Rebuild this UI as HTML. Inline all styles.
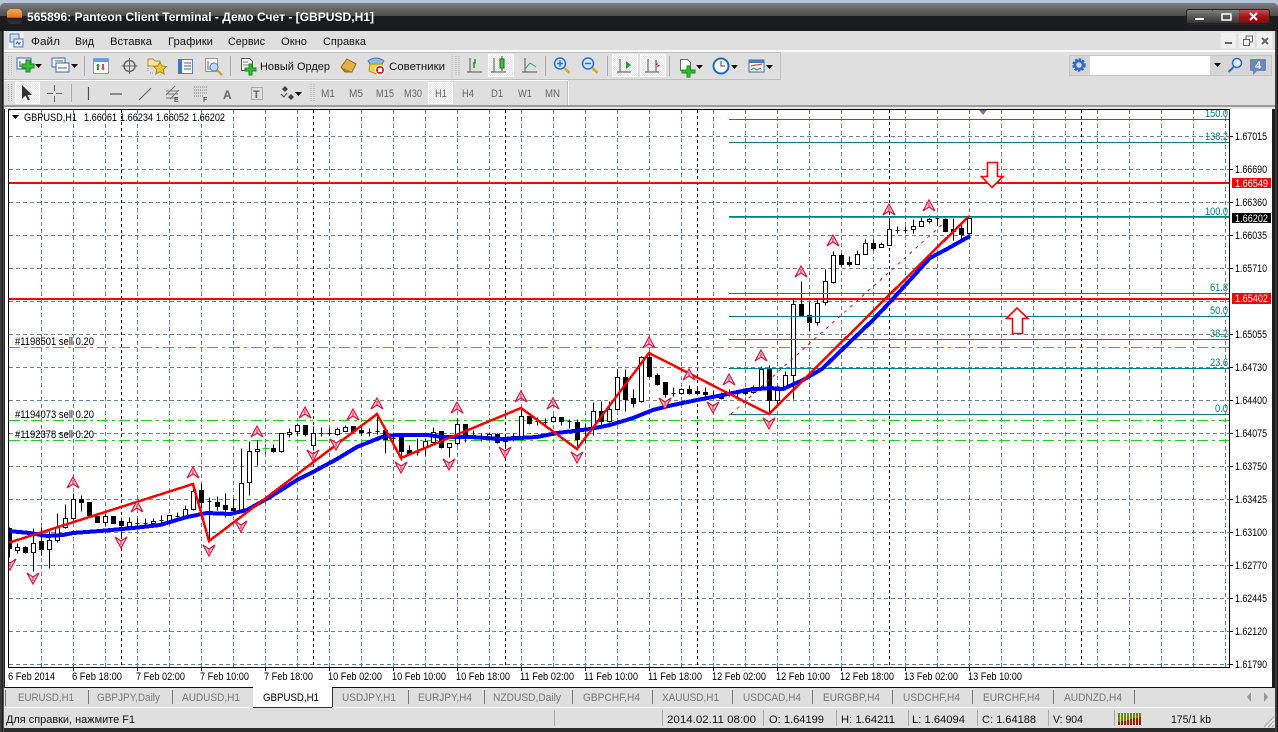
<!DOCTYPE html>
<html><head><meta charset="utf-8"><title>Panteon Client Terminal</title>
<style>
html,body{margin:0;padding:0;background:#1a1a1a;overflow:hidden}
svg{display:block}
text{font-family:"Liberation Sans","Noto Sans CJK SC",sans-serif;font-size:11px;fill:#111}
.c text{font-size:11px;fill:#000}
.f text{font-size:11px;fill:#008080}
.t text{font-size:11px;fill:#777}
.s text{font-size:11px;fill:#111}
.m text{font-size:11px;fill:#666}
</style></head><body>
<svg xmlns="http://www.w3.org/2000/svg" width="1278" height="732" viewBox="0 0 1278 732">
<defs>
<linearGradient id="tg" x1="0" y1="0" x2="0" y2="1"><stop offset="0" stop-color="#7c7c7c"/><stop offset="1" stop-color="#4c4c4c"/></linearGradient>
<linearGradient id="rb" x1="0" y1="0" x2="0" y2="1"><stop offset="0" stop-color="#c85050"/><stop offset=".5" stop-color="#a01818"/><stop offset="1" stop-color="#800c0c"/></linearGradient>
<linearGradient id="gb" x1="0" y1="0" x2="0" y2="1"><stop offset="0" stop-color="#808080"/><stop offset=".5" stop-color="#585858"/><stop offset="1" stop-color="#333"/></linearGradient>
<linearGradient id="og" x1="0" y1="0" x2="0" y2="1"><stop offset="0" stop-color="#f4a860"/><stop offset=".55" stop-color="#e87818"/><stop offset=".6" stop-color="#222"/><stop offset="1" stop-color="#333"/></linearGradient>
<pattern id="hat" width="2" height="2" patternUnits="userSpaceOnUse"><rect width="2" height="2" fill="#e8e8e8"/><rect width="1" height="1" fill="#f8f8f8"/><rect x="1" y="1" width="1" height="1" fill="#f8f8f8"/></pattern>
<g id="mu"><path d="M-6 5L0-6 6 5 0 1z" fill="#f8d4dc" stroke="#dc143c" stroke-width="1.200"/><path d="M0-3V1" stroke="#dc143c"/></g>
<g id="md"><path d="M-6-5L0 6 6-5 0-1z" fill="#f8d4dc" stroke="#dc143c" stroke-width="1.200"/><path d="M0 3V-1" stroke="#dc143c"/></g>
<path id="dd" d="M0 0h7l-3.500 4z" fill="#111"/>
</defs>

<!-- frame -->
<rect width="1278" height="732" fill="#1c1c1c"/>
<rect x="0" y="0" width="1278" height="3" fill="#b4c6de"/>
<path d="M0 3h6q-6 0-6 6zM1278 3h-6q6 0 6 6z" fill="#b4c6de"/>
<path d="M0 9Q0 3 6 3H1272Q1278 3 1278 9V16H0z" fill="url(#tg)"/>
<rect x="0" y="16" width="1278" height="15" fill="#1b1c1e"/>
<rect x="0" y="31" width="2" height="701" fill="#3a3a3a"/>
<rect x="3" y="31" width="1" height="701" fill="#555"/>
<rect x="1275" y="31" width="2" height="701" fill="#3a3a3a"/>

<!-- title -->
<rect x="7" y="9" width="15" height="15" rx="4" fill="url(#og)"/>
<text x="27" y="21" textLength="347" lengthAdjust="spacingAndGlyphs" style="font-size:12px;font-weight:bold;fill:#fff">565896: Panteon Client Terminal - Демо Счет - [GBPUSD,H1]</text>
<rect x="1186" y="9" width="84" height="16" rx="3" fill="#222"/>
<rect x="1187" y="10" width="26" height="13" rx="2" fill="url(#gb)"/><rect x="1213" y="10" width="26" height="13" fill="url(#gb)"/><rect x="1239" y="10" width="30" height="13" rx="2" fill="url(#rb)"/>
<rect x="1195" y="18" width="9" height="2" fill="#fff"/>
<rect x="1222" y="14" width="9" height="6" fill="none" stroke="#fff" stroke-width="1.500"/>
<path d="M1250 13l7 7M1257 13l-7 7" stroke="#fff" stroke-width="2"/>

<!-- chrome bg -->
<rect x="4" y="31" width="1271" height="78" fill="#dfdfdf"/>
<rect x="4" y="50" width="1271" height="2" fill="#fbfbfb"/>

<!-- menu -->
<rect x="8" y="32" width="16" height="17" fill="#f4f4f4" stroke="#ddd"/>
<rect x="10" y="34" width="9" height="8" fill="#cfe0f4" stroke="#4a74b8"/>
<rect x="14" y="39" width="9" height="8" fill="#e8f0fa" stroke="#4a74b8"/>
<path d="M16 44l1.500-2 1.500 2 1.500-2" stroke="#3a5a9a" fill="none"/>
<g>
<text x="31" y="45" textLength="29" lengthAdjust="spacingAndGlyphs">Файл</text>
<text x="75" y="45" textLength="19" lengthAdjust="spacingAndGlyphs">Вид</text>
<text x="110" y="45" textLength="42" lengthAdjust="spacingAndGlyphs">Вставка</text>
<text x="168" y="45" textLength="45" lengthAdjust="spacingAndGlyphs">Графики</text>
<text x="228" y="45" textLength="37" lengthAdjust="spacingAndGlyphs">Сервис</text>
<text x="281" y="45" textLength="26" lengthAdjust="spacingAndGlyphs">Окно</text>
<text x="323" y="45" textLength="43" lengthAdjust="spacingAndGlyphs">Справка</text>
</g>
<!-- MDI buttons -->
<g fill="#f0f0f0" stroke="#e4e4e4"><rect x="1220.500" y="32.500" width="16" height="16"/><rect x="1238.500" y="32.500" width="16" height="16"/><rect x="1256.500" y="32.500" width="16" height="16"/></g>
<rect x="1225" y="42" width="7" height="2" fill="#666"/>
<path d="M1243.500 39.500h6v6h-6zM1246 39v-3h6.500v6h-3" fill="none" stroke="#666"/>
<path d="M1262 38l6 6M1268 38l-6 6" stroke="#666" stroke-width="2"/>

<!-- toolbar rows -->
<path d="M4 79.500H780M4 52.500H780M780.500 52V80" stroke="#bdbdbd"/>
<path d="M4 80.500H568" stroke="#fafafa"/>
<path d="M4 105.500H568M567.500 81V105" stroke="#bdbdbd"/>
<path d="M568.500 81V105" stroke="#fafafa"/>
<rect x="4" y="105" width="1271" height="2" fill="#9a9a9a"/>
<rect x="4" y="107" width="1271" height="2" fill="#e8e8e8"/>
<path d="M8.500 56V76M11.500 56V76M452 54V78" stroke="#bbb" stroke-dasharray="1 1"/>
<path d="M8.500 84V102M11.500 84V102M311 84V102M314 84V102M456 56V76M459 56V76" stroke="#aaa" stroke-dasharray="1 1"/>
<path d="M84.500 56V76M230.500 56V76M545.500 56V76M607.500 56V76M669.500 56V76M71.500 84V102" stroke="#aaa"/>

<!-- row 1 icons -->
<g>
<rect x="17" y="58" width="14" height="11" fill="#eef4fc" stroke="#3a6ab8"/><path d="M20 61v6M20 66h8" stroke="#555"/>
<path d="M26 60h4v4h4v4h-4v4h-4v-4h-4v-4h4z" fill="#34c034" stroke="#1a8a1a"/><use href="#dd" x="35" y="64"/>
<rect x="52" y="58" width="13" height="9" fill="#eef4fc" stroke="#3a6ab8"/><rect x="56" y="63" width="13" height="9" fill="#f8fbff" stroke="#3a6ab8"/><path d="M58 68h9M55 61h8" stroke="#666"/><use href="#dd" x="71" y="64"/>
<rect x="93.500" y="58.500" width="15" height="15" rx="1" fill="#f8fbff" stroke="#7a9ad0"/><rect x="94" y="59" width="14" height="3" fill="#6a9ae0"/><path d="M98 64l2 2h-4zM103 70l2-2h-4z" fill="#e05030"/><path d="M98 64v6" stroke="#30a030" stroke-width="2"/><path d="M103 70v-6" stroke="#e05030" stroke-width="2"/>
<circle cx="129.500" cy="66" r="5.500" fill="none" stroke="#666" stroke-width="1.500"/><path d="M129.500 58v16M121.500 66h16" stroke="#666"/>
<path d="M148 59h5l2 2h5v5h-12z" fill="#f6e7a0" stroke="#aa9040"/><path d="M148 66v6M150 73h4" stroke="#888" stroke-dasharray="1 1"/>
<path d="M160 62l2 4 4.500.500-3.300 3 1 4.500-4.200-2.300-4.200 2.300 1-4.500-3.300-3 4.500-.500z" fill="#f4c830" stroke="#b08a10"/>
<rect x="178.500" y="59.500" width="14" height="14" fill="#f4f8ff" stroke="#5a80c0"/><rect x="178" y="59" width="4" height="15" fill="#3a78d0"/><path d="M184 63h7M184 66h7M184 69h7" stroke="#666"/>
<rect x="205.500" y="58.500" width="12" height="13" fill="#f4f4f4" stroke="#999"/><path d="M208 61v8h7" stroke="#777" fill="none"/><circle cx="214" cy="67" r="4" fill="#bcd8f4" stroke="#4a84c8"/><path d="M217 70l5 5" stroke="#d0a020" stroke-width="2"/>
<path d="M241.500 58.500h8l3 3v9h-11z" fill="#fff" stroke="#555"/><path d="M243 62h5M243 65h7" stroke="#777"/>
<path d="M249 64h3v4h4v3h-4v4h-3v-4h-4v-3h4z" fill="#34c034" stroke="#1a8a1a"/>
<text x="260" y="70" textLength="70" lengthAdjust="spacingAndGlyphs">Новый Ордер</text>
<path d="M341 67l6-8 9 5-4 8-7 0z" fill="#e4b048" stroke="#8a6a20"/><path d="M341 67l4 5h7" fill="#b08020" stroke="#8a6a20"/>
<path d="M368 61q8-6 16 0l-2 3h-12z" fill="#88bce8" stroke="#4a74a8"/><path d="M370 64h12l1 7-7 3-7-3z" fill="#f4d050" stroke="#b09020"/><circle cx="380" cy="70" r="4.500" fill="#e02020" stroke="#fff"/><rect x="378" y="68" width="4" height="4" fill="#fff"/>
<text x="389" y="70" textLength="56" lengthAdjust="spacingAndGlyphs">Советники</text>
<!-- chart type -->
<g fill="none" stroke="#555"><path d="M470 58v14M467 72h15"/></g>
<path d="M475 59v4h-1v5" stroke="#1a9a1a" fill="none" stroke-width="1.500"/>
<rect x="488.500" y="54.500" width="25" height="22" fill="url(#hat)" stroke="#fafafa"/>
<path d="M494 58v14M491 72h15" stroke="#555" fill="none"/><rect x="500" y="59" width="4" height="9" fill="#40c040" stroke="#107010"/><path d="M502 56v3M502 68v3" stroke="#107010"/>
<path d="M525 58v14M522 72h15" stroke="#555" fill="none"/><path d="M525 69l5-6 6 4" stroke="#40a060" fill="none"/>
<!-- zoom -->
<circle cx="560" cy="63.500" r="5.500" fill="#cfe4fa" stroke="#2a70c8" stroke-width="1.500"/><path d="M557 63.500h6M560 60.500v6" stroke="#2a70c8" stroke-width="1.500"/><path d="M564.500 68l5 5" stroke="#d8a820" stroke-width="2.500"/>
<circle cx="588" cy="63.500" r="5.500" fill="#cfe4fa" stroke="#2a70c8" stroke-width="1.500"/><path d="M585 63.500h6" stroke="#2a70c8" stroke-width="1.500"/><path d="M592.500 68l5 5" stroke="#d8a820" stroke-width="2.500"/>
<!-- shift -->
<rect x="612.500" y="54.500" width="25" height="22" fill="url(#hat)" stroke="#fafafa"/><path d="M620 59v13M617 72h14" stroke="#555" fill="none"/><path d="M626 61l5 4-5 4z" fill="#2a9a2a"/>
<rect x="640.500" y="54.500" width="25" height="22" fill="url(#hat)" stroke="#fafafa"/><path d="M648 59v13M645 72h14M656 60v12" stroke="#555" fill="none"/><path d="M660 65l-5 0 2.500-2.500v5z" fill="#c03010"/>
<path d="M680.500 59.500h7l3 3v8h-10z" fill="#fff" stroke="#666"/><path d="M687 66h3v4h5v3h-5v4h-3v-4h-5v-3h5z" fill="#34c034" stroke="#1a8a1a"/><use href="#dd" x="696" y="65"/>
<circle cx="721" cy="66" r="7.500" fill="#fff" stroke="#1c6cc8" stroke-width="2"/><path d="M721 61v5h4" stroke="#444" fill="none"/><use href="#dd" x="731" y="65"/>
<rect x="749" y="60" width="15" height="12" fill="#f8f8f8" stroke="#3a6ab0"/><rect x="749" y="60" width="15" height="3" fill="#4a7ac0"/><path d="M751 66l4-1 3 0 4-1" stroke="#a04020" fill="none"/><path d="M751 70l3-2 3 2 4-2" stroke="#30a030" fill="none"/><use href="#dd" x="766" y="65"/>
</g>

<!-- row 2 -->
<g>
<rect x="15.500" y="82.500" width="24" height="21" fill="url(#hat)" stroke="#fafafa"/>
<path d="M22 85l0 14 3.500-3.500 2.500 5 2-1-2.500-4.500 4.500 0z" fill="#333"/>
<path d="M54.500 85v6M54.500 96v6M47 93.500h6M56 93.500h6" stroke="#666"/>
<path d="M88.500 87v13" stroke="#555" stroke-width="1.200"/>
<path d="M110 94h12" stroke="#555" stroke-width="1.200"/>
<path d="M139 100l12-12" stroke="#666" stroke-width="1.200"/>
<path d="M166 95l9-9M170 99l9-9M166 91h12M166 94h12M166 98h12" stroke="#777" fill="none"/><text x="174" y="102" style="font-size:7px;font-weight:bold;fill:#555">E</text>
<path d="M194 87h14M194 90h14M194 93h14M194 96h10" stroke="#777" stroke-dasharray="1 1"/><text x="203" y="102" style="font-size:7px;font-weight:bold;fill:#555">F</text>
<text x="223" y="99" style="font-size:12px;font-weight:bold;fill:#666">A</text>
<rect x="251.500" y="87.500" width="11" height="12" fill="none" stroke="#777" stroke-dasharray="1 1"/><text x="253" y="98" style="font-size:11px;font-weight:bold;fill:#666">T</text>
<path d="M282 89l3-3 3 3-3 3zM288 97l3-3 3 3-3 3z" fill="#444"/><path d="M281 94l3 3 3-4" stroke="#444" fill="none"/><use href="#dd" x="295" y="92"/>
</g>
<g class="m">
<text x="321" y="97" textLength="14" lengthAdjust="spacingAndGlyphs">M1</text>
<text x="349" y="97" textLength="14" lengthAdjust="spacingAndGlyphs">M5</text>
<text x="376" y="97" textLength="18" lengthAdjust="spacingAndGlyphs">M15</text>
<text x="404" y="97" textLength="18" lengthAdjust="spacingAndGlyphs">M30</text>
<rect x="428.500" y="82.500" width="24" height="21" fill="url(#hat)" stroke="#fafafa"/>
<text x="435" y="97" textLength="12" lengthAdjust="spacingAndGlyphs">H1</text>
<text x="462" y="97" textLength="12" lengthAdjust="spacingAndGlyphs">H4</text>
<text x="491" y="97" textLength="12" lengthAdjust="spacingAndGlyphs">D1</text>
<text x="518" y="97" textLength="14" lengthAdjust="spacingAndGlyphs">W1</text>
<text x="545" y="97" textLength="15" lengthAdjust="spacingAndGlyphs">MN</text>
</g>

<!-- search -->
<rect x="1069.500" y="55.500" width="202" height="20" fill="#d6d6d6" stroke="#c4c4c4"/>
<rect x="1090" y="56" width="120" height="19" fill="#fff"/>
<circle cx="1079" cy="65" r="5" fill="none" stroke="#2a6cd0" stroke-width="3.500" stroke-dasharray="2.200 1.100"/><circle cx="1079" cy="65" r="4" fill="none" stroke="#2a6cd0" stroke-width="2.500"/>
<use href="#dd" x="1214" y="63"/>
<circle cx="1237" cy="63" r="4.500" fill="#e4f0fc" stroke="#2a6cc0" stroke-width="1.500"/><path d="M1233.500 67l-5 5" stroke="#2a6cc0" stroke-width="2"/>
<path d="M1248 59h23" stroke="#d6d6d6"/>
<rect x="1250" y="59" width="16" height="12" rx="1" fill="#6a88c0"/><path d="M1253 71v4l4-4z" fill="#6a88c0"/>
<text x="1255" y="69" style="font-size:11px;font-weight:bold;fill:#fff">4</text>

<!-- chart area -->
<rect x="5" y="109" width="1267" height="578" fill="#fff"/>
<rect x="4" y="687" width="1271" height="1" fill="#111"/>
<rect x="4" y="688" width="1271" height="19" fill="#dfdfdf"/>
<rect x="4" y="707" width="1271" height="1" fill="#fafafa"/>
<rect x="4" y="708" width="1271" height="20" fill="#dfdfdf"/>

<g>
<svg x="8" y="109" width="1222" height="559" viewBox="8 109 1222 559">
<!-- grid -->
<path fill="none" stroke="#708090" stroke-dasharray="4 3" shape-rendering="crispEdges" d="M41.500 110V667M73.500 110V667M105.500 110V667M137.500 110V667M169.500 110V667M201.500 110V667M233.500 110V667M265.500 110V667M297.500 110V667M329.500 110V667M361.500 110V667M393.500 110V667M425.500 110V667M457.500 110V667M489.500 110V667M521.500 110V667M553.500 110V667M585.500 110V667M617.500 110V667M649.500 110V667M681.500 110V667M713.500 110V667M745.500 110V667M777.500 110V667M809.500 110V667M841.500 110V667M873.500 110V667M905.500 110V667M937.500 110V667M969.500 110V667M1001.500 110V667M1033.500 110V667M1065.500 110V667M1097.500 110V667M1129.500 110V667M1161.500 110V667M1193.500 110V667M1225.500 110V667"/>
<path fill="none" stroke="#708090" stroke-dasharray="4 3" shape-rendering="crispEdges" d="M9 136.500H1229M9 169.500H1229M9 202.500H1229M9 235.500H1229M9 268.500H1229M9 301.500H1229M9 334.500H1229M9 367.500H1229M9 400.500H1229M9 433.500H1229M9 466.500H1229M9 499.500H1229M9 532.500H1229M9 565.500H1229M9 598.500H1229M9 631.500H1229M9 664.500H1229"/>
<path fill="none" stroke="#000" stroke-dasharray="3 3" shape-rendering="crispEdges" d="M121.500 110V667M313.500 110V667M505.500 110V667M697.500 110V667M889.500 110V667M1081.500 110V667"/>
<!-- order lines -->
<path fill="none" stroke="#22cc22" stroke-dasharray="11 4 3 4" shape-rendering="crispEdges" d="M9 347.500H1229M9 420.500H1229M9 440.500H1229"/>
<!-- candles -->
<g transform="translate(.5 .5)" shape-rendering="crispEdges">
<path stroke="#000" fill="none" d="M9 527V557M17 543V553M25 546V553M33 528V571M41 527V555M49 528V568M57 513V542M65 504V528M73 493V520M81 495V511M89 502V516M97 516V522M105 513V525M113 516V523M121 517V537M129 517V526M137 518V527M135 523h4M145 518V526M143 523h4M153 518V525M161 515V522M159 520h4M169 515V522M177 512V517M175 516h4M185 505V517M193 483V510M201 483V508M209 497V542M207 501h4M217 496V510M225 493V517M233 498V513M241 448V512M249 441V495M257 440V465M265 444V453M263 448h4M273 444V452M281 433V452M289 428V437M297 423V436M305 425V436M313 426V450M321 427V436M319 433h4M329 428V435M327 433h4M337 427V435M345 425V431M353 426V433M361 427V435M369 428V436M367 432h4M377 415V434M375 431h4M385 430V453M393 433V443M391 438h4M401 437V460M409 445V455M417 438V455M415 452h4M425 438V455M433 427V443M441 431V448M449 443V457M457 418V445M465 424V442M473 430V438M481 433V441M479 437h4M489 433V440M497 433V443M505 437V447M513 433V441M521 408V440M529 416V424M537 417V425M535 421h4M545 418V425M543 422h4M553 415V422M561 417V425M569 419V428M567 421h4M577 419V450M585 423V443M583 430h4M593 402V435M601 401V425M609 401V422M617 369V410M625 369V411M633 389V407M641 356V402M649 353V377M657 373V385M665 382V397M673 387V396M671 393h4M681 388V394M689 385V394M697 386V395M705 387V396M713 391V398M711 395h4M721 392V399M729 389V396M727 393h4M737 390V396M735 393h4M745 388V395M753 385V393M761 366V390M769 365V413M777 385V406M785 371V390M793 299V399M801 281V316M809 302V331M817 299V325M825 269V305M833 251V283M841 253V266M849 256V266M857 250V264M865 239V254M873 239V250M881 242V247M889 218V245M897 226V233M895 230h4M905 226V233M903 230h4M913 219V233M921 216V226M929 215V223M937 217V225M935 218h4M945 218V231M953 218V240M961 224V238M969 216V234"/>
<path stroke="#000" fill="#000" d="M8 528h3v20h-3zM23 547h4v5h-4zM39 541h4v8h-4zM79 499h4v3h-4zM87 502h4v13h-4zM95 516h4v6h-4zM111 516h4v7h-4zM119 521h4v4h-4zM199 490h4v12h-4zM215 502h4v4h-4zM223 505h4v4h-4zM231 508h4v2h-4zM271 448h4v3h-4zM303 425h4v9h-4zM351 426h4v5h-4zM359 430h4v2h-4zM383 430h4v9h-4zM399 437h4v14h-4zM407 450h4v3h-4zM439 431h4v16h-4zM463 424h4v12h-4zM471 435h4v2h-4zM495 434h4v8h-4zM503 437h4v4h-4zM511 436h4v3h-4zM527 416h4v7h-4zM559 417h4v4h-4zM575 422h4v17h-4zM599 411h4v10h-4zM623 377h4v22h-4zM631 398h4v5h-4zM647 357h4v19h-4zM655 375h4v9h-4zM663 382h4v12h-4zM687 389h4v4h-4zM695 391h4v2h-4zM703 392h4v2h-4zM719 395h4v3h-4zM743 392h4v1h-4zM767 369h4v31h-4zM799 304h4v12h-4zM807 315h4v7h-4zM839 255h4v9h-4zM847 262h4v2h-4zM871 243h4v5h-4zM943 219h4v12h-4zM951 229h4v2h-4zM959 228h4v6h-4z"/>
<path stroke="#000" fill="#fff" d="M15 547h4v3h-4zM31 543h4v9h-4zM47 540h4v9h-4zM55 527h4v13h-4zM63 518h4v9h-4zM71 499h4v19h-4zM103 516h4v6h-4zM127 522h4v4h-4zM151 521h4v2h-4zM167 515h4v6h-4zM183 509h4v7h-4zM191 491h4v18h-4zM239 483h4v27h-4zM247 451h4v31h-4zM255 449h4v2h-4zM279 433h4v18h-4zM287 432h4v2h-4zM295 425h4v6h-4zM311 433h4v12h-4zM335 429h4v5h-4zM343 427h4v4h-4zM423 441h4v6h-4zM431 432h4v10h-4zM447 443h4v4h-4zM455 424h4v19h-4zM487 434h4v4h-4zM519 416h4v21h-4zM551 417h4v4h-4zM591 411h4v18h-4zM607 409h4v12h-4zM615 377h4v32h-4zM639 357h4v44h-4zM679 389h4v4h-4zM751 387h4v5h-4zM759 369h4v19h-4zM775 390h4v10h-4zM783 375h4v12h-4zM791 304h4v71h-4zM815 303h4v19h-4zM823 281h4v21h-4zM831 255h4v27h-4zM855 254h4v10h-4zM863 243h4v11h-4zM879 244h4v3h-4zM887 229h4v16h-4zM911 226h4v3h-4zM919 221h4v5h-4zM927 219h4v2h-4zM967 218h4v15h-4z"/>
<path stroke="#22cc22" d="M262 448h7M265 445v7"/>
</g>
<!-- fib -->
<path stroke="#008080" fill="none" shape-rendering="crispEdges" d="M729 119.500H1229M729 142.500H1229M729 216.500H1229M729 293.500H1229M729 316.500H1229M729 339.500H1229M729 368.500H1229M729 414.500H1229"/>
<path stroke="#708090" fill="none" shape-rendering="crispEdges" d="M729 217.500H1229"/>
<path stroke="#ff0000" fill="none" stroke-dasharray="3 5" shape-rendering="crispEdges" d="M731 414L945 222"/>
<!-- red h lines -->
<path stroke="#ff0000" stroke-width="2" fill="none" shape-rendering="crispEdges" d="M8 183H1229M8 299H1229"/>
<!-- blue MA -->
<path fill="none" stroke="#0000ff" stroke-width="4" stroke-linejoin="round" shape-rendering="crispEdges" d="M8 531L30 533 47 536 63 535 73 533 100 531 133 528 160 525 187 517 207 513 230 514 247 510 270 497 297 480 313 472 337 459 357 447 382 437 397 435 427 435 443 437 470 437 503 439 537 437 557 433 590 429 610 425 633 418 653 410 673 405 697 400 723 395 747 390 770 388 783 389 803 380 822 369 850 342 873 320 890 302 910 280 930 258 947 249 970 236"/>
<!-- zigzag -->
<path fill="none" stroke="#ff0000" stroke-width="2.500" shape-rendering="crispEdges" d="M8 543L193 484 209 541 377 414 401 458 521 408 577 449 649 353 769 414 969 216"/>
<!-- fractal markers -->
<use href="#mu" x="73" y="483"/><use href="#mu" x="137" y="507"/><use href="#mu" x="193" y="473"/><use href="#mu" x="257" y="432"/><use href="#mu" x="305" y="413"/><use href="#mu" x="353" y="415"/><use href="#mu" x="377" y="404"/><use href="#mu" x="457" y="408"/><use href="#mu" x="521" y="397"/><use href="#mu" x="553" y="404"/><use href="#mu" x="649" y="343"/><use href="#mu" x="689" y="375"/><use href="#mu" x="729" y="380"/><use href="#mu" x="761" y="356"/><use href="#mu" x="801" y="272"/><use href="#mu" x="833" y="241"/><use href="#mu" x="889" y="210"/><use href="#mu" x="929" y="206"/>
<use href="#md" x="10" y="564"/><use href="#md" x="33" y="578"/><use href="#md" x="121" y="542"/><use href="#md" x="209" y="550"/><use href="#md" x="241" y="526"/><use href="#md" x="313" y="455"/><use href="#md" x="336" y="444"/><use href="#md" x="401" y="467"/><use href="#md" x="449" y="464"/><use href="#md" x="505" y="452"/><use href="#md" x="577" y="457"/><use href="#md" x="665" y="403"/><use href="#md" x="713" y="407"/><use href="#md" x="769" y="423"/>
<!-- big arrows -->
<path d="M987.500 162.500h10v14h5.500l-11 11-10.500-11h6z" fill="#fff" stroke="#ff0000" stroke-width="1.600"/>
<path d="M1012.500 333.500h10v-15h5.500l-11-10.500-10.500 10.500h6z" fill="#fff" stroke="#ff0000" stroke-width="1.600"/>
<path d="M979 110h8l-4 5z" fill="#778"/>
<g class="c">
<path d="M12 115h7l-3.500 4z" fill="#000"/>
<text x="24" y="121" textLength="53" lengthAdjust="spacingAndGlyphs">GBPUSD,H1</text>
<text x="84" y="121" textLength="33" lengthAdjust="spacingAndGlyphs">1.66061</text>
<text x="120" y="121" textLength="33" lengthAdjust="spacingAndGlyphs">1.66234</text>
<text x="156" y="121" textLength="33" lengthAdjust="spacingAndGlyphs">1.66052</text>
<text x="192" y="121" textLength="33" lengthAdjust="spacingAndGlyphs">1.66202</text>
<text x="15" y="345" textLength="79" lengthAdjust="spacingAndGlyphs">#1198501 sell 0.20</text>
<text x="15" y="418" textLength="79" lengthAdjust="spacingAndGlyphs">#1194073 sell 0.20</text>
<text x="15" y="438" textLength="79" lengthAdjust="spacingAndGlyphs">#1192378 sell 0.20</text>
</g>
<g class="f" text-anchor="end">
<text x="1228" y="117" textLength="23" lengthAdjust="spacingAndGlyphs">150.0</text>
<text x="1228" y="140" textLength="23" lengthAdjust="spacingAndGlyphs">138.2</text>
<text x="1228" y="215" textLength="23" lengthAdjust="spacingAndGlyphs">100.0</text>
<text x="1228" y="291" textLength="18" lengthAdjust="spacingAndGlyphs">61.8</text>
<text x="1228" y="314" textLength="18" lengthAdjust="spacingAndGlyphs">50.0</text>
<text x="1228" y="337" textLength="18" lengthAdjust="spacingAndGlyphs">38.2</text>
<text x="1228" y="366" textLength="18" lengthAdjust="spacingAndGlyphs">23.6</text>
<text x="1228" y="412" textLength="13" lengthAdjust="spacingAndGlyphs">0.0</text>
</g>
</svg>
</g>
<!-- chart box -->
<rect x="8.500" y="109.500" width="1221" height="558" fill="none" stroke="#000" shape-rendering="crispEdges"/>
<!-- axis ticks -->
<path stroke="#000" shape-rendering="crispEdges" d="M1230 136.500h3M1230 169.500h3M1230 202.500h3M1230 235.500h3M1230 268.500h3M1230 334.500h3M1230 367.500h3M1230 400.500h3M1230 433.500h3M1230 466.500h3M1230 499.500h3M1230 532.500h3M1230 565.500h3M1230 598.500h3M1230 631.500h3M1230 664.500h3M73.500 668v3M137.500 668v3M201.500 668v3M265.500 668v3M329.500 668v3M393.500 668v3M457.500 668v3M521.500 668v3M585.500 668v3M649.500 668v3M713.500 668v3M777.500 668v3M841.500 668v3M905.500 668v3M969.500 668v3"/>
<g class="c">
<text x="1235" y="140" textLength="32" lengthAdjust="spacingAndGlyphs">1.67015</text>
<text x="1235" y="173" textLength="32" lengthAdjust="spacingAndGlyphs">1.66690</text>
<text x="1235" y="206" textLength="32" lengthAdjust="spacingAndGlyphs">1.66360</text>
<text x="1235" y="239" textLength="32" lengthAdjust="spacingAndGlyphs">1.66035</text>
<text x="1235" y="272" textLength="32" lengthAdjust="spacingAndGlyphs">1.65710</text>
<text x="1235" y="338" textLength="32" lengthAdjust="spacingAndGlyphs">1.65055</text>
<text x="1235" y="371" textLength="32" lengthAdjust="spacingAndGlyphs">1.64730</text>
<text x="1235" y="404" textLength="32" lengthAdjust="spacingAndGlyphs">1.64400</text>
<text x="1235" y="437" textLength="32" lengthAdjust="spacingAndGlyphs">1.64075</text>
<text x="1235" y="470" textLength="32" lengthAdjust="spacingAndGlyphs">1.63750</text>
<text x="1235" y="503" textLength="32" lengthAdjust="spacingAndGlyphs">1.63425</text>
<text x="1235" y="536" textLength="32" lengthAdjust="spacingAndGlyphs">1.63100</text>
<text x="1235" y="569" textLength="32" lengthAdjust="spacingAndGlyphs">1.62770</text>
<text x="1235" y="602" textLength="32" lengthAdjust="spacingAndGlyphs">1.62445</text>
<text x="1235" y="635" textLength="32" lengthAdjust="spacingAndGlyphs">1.62120</text>
<text x="1235" y="668" textLength="32" lengthAdjust="spacingAndGlyphs">1.61790</text>
<rect x="1232" y="178" width="39" height="10" fill="#ff0000"/>
<text x="1235" y="187" textLength="33" lengthAdjust="spacingAndGlyphs" style="fill:#fff">1.66549</text>
<rect x="1232" y="293" width="39" height="11" fill="#ff0000"/>
<text x="1235" y="302" textLength="33" lengthAdjust="spacingAndGlyphs" style="fill:#fff">1.65402</text>
<rect x="1232" y="213" width="39" height="10" fill="#000"/>
<text x="1235" y="222" textLength="33" lengthAdjust="spacingAndGlyphs" style="fill:#fff">1.66202</text>
<text x="8" y="680" textLength="47" lengthAdjust="spacingAndGlyphs">6 Feb 2014</text>
<text x="72" y="680" textLength="50" lengthAdjust="spacingAndGlyphs">6 Feb 18:00</text>
<text x="136" y="680" textLength="49" lengthAdjust="spacingAndGlyphs">7 Feb 02:00</text>
<text x="200" y="680" textLength="49" lengthAdjust="spacingAndGlyphs">7 Feb 10:00</text>
<text x="264" y="680" textLength="49" lengthAdjust="spacingAndGlyphs">7 Feb 18:00</text>
<text x="328" y="680" textLength="54" lengthAdjust="spacingAndGlyphs">10 Feb 02:00</text>
<text x="392" y="680" textLength="54" lengthAdjust="spacingAndGlyphs">10 Feb 10:00</text>
<text x="456" y="680" textLength="54" lengthAdjust="spacingAndGlyphs">10 Feb 18:00</text>
<text x="520" y="680" textLength="54" lengthAdjust="spacingAndGlyphs">11 Feb 02:00</text>
<text x="584" y="680" textLength="54" lengthAdjust="spacingAndGlyphs">11 Feb 10:00</text>
<text x="648" y="680" textLength="54" lengthAdjust="spacingAndGlyphs">11 Feb 18:00</text>
<text x="712" y="680" textLength="54" lengthAdjust="spacingAndGlyphs">12 Feb 02:00</text>
<text x="776" y="680" textLength="54" lengthAdjust="spacingAndGlyphs">12 Feb 10:00</text>
<text x="840" y="680" textLength="54" lengthAdjust="spacingAndGlyphs">12 Feb 18:00</text>
<text x="904" y="680" textLength="54" lengthAdjust="spacingAndGlyphs">13 Feb 02:00</text>
<text x="968" y="680" textLength="54" lengthAdjust="spacingAndGlyphs">13 Feb 10:00</text>
</g>

<!-- tabs -->
<rect x="253" y="687" width="79" height="20" fill="#fff"/>
<path d="M253 707.500H332M332.500 688V707" stroke="#333" fill="none"/>
<path d="M5.500 690V706M88.500 690V704M172.500 690V704M408.500 690V704M484.500 690V704M572.500 690V704M652.500 690V704M732.500 690V704M812.500 690V704M892.500 690V704M972.500 690V704M1053.500 690V704M1134.500 690V704" stroke="#777"/>
<g class="t">
<text x="18" y="701" textLength="56" lengthAdjust="spacingAndGlyphs">EURUSD,H1</text>
<text x="97" y="701" textLength="63" lengthAdjust="spacingAndGlyphs">GBPJPY,Daily</text>
<text x="182" y="701" textLength="58" lengthAdjust="spacingAndGlyphs">AUDUSD,H1</text>
<text x="263" y="701" textLength="56" lengthAdjust="spacingAndGlyphs" style="fill:#000">GBPUSD,H1</text>
<text x="342" y="701" textLength="54" lengthAdjust="spacingAndGlyphs">USDJPY,H1</text>
<text x="418" y="701" textLength="54" lengthAdjust="spacingAndGlyphs">EURJPY,H4</text>
<text x="493" y="701" textLength="68" lengthAdjust="spacingAndGlyphs">NZDUSD,Daily</text>
<text x="583" y="701" textLength="57" lengthAdjust="spacingAndGlyphs">GBPCHF,H4</text>
<text x="662" y="701" textLength="57" lengthAdjust="spacingAndGlyphs">XAUUSD,H1</text>
<text x="743" y="701" textLength="58" lengthAdjust="spacingAndGlyphs">USDCAD,H4</text>
<text x="823" y="701" textLength="57" lengthAdjust="spacingAndGlyphs">EURGBP,H4</text>
<text x="903" y="701" textLength="57" lengthAdjust="spacingAndGlyphs">USDCHF,H4</text>
<text x="983" y="701" textLength="57" lengthAdjust="spacingAndGlyphs">EURCHF,H4</text>
<text x="1064" y="701" textLength="58" lengthAdjust="spacingAndGlyphs">AUDNZD,H4</text>
</g>
<path d="M1251 692l-4 5 4 5zM1264 692l4 5-4 5z" fill="#999"/>

<!-- status -->
<path d="M554.500 710V726M662.500 710V726M763.500 710V726M836.500 710V726M908.500 710V726M977.500 710V726M1048.500 710V726M1114.500 710V726" stroke="#aaa"/>
<g class="s">
<text x="6" y="723" textLength="129" lengthAdjust="spacingAndGlyphs">Для справки, нажмите F1</text>
<text x="667" y="723" textLength="89" lengthAdjust="spacingAndGlyphs">2014.02.11 08:00</text>
<text x="769" y="723" textLength="55" lengthAdjust="spacingAndGlyphs">O: 1.64199</text>
<text x="841" y="723" textLength="54" lengthAdjust="spacingAndGlyphs">H: 1.64211</text>
<text x="912" y="723" textLength="53" lengthAdjust="spacingAndGlyphs">L: 1.64094</text>
<text x="982" y="723" textLength="54" lengthAdjust="spacingAndGlyphs">C: 1.64188</text>
<text x="1053" y="723" textLength="30" lengthAdjust="spacingAndGlyphs">V: 904</text>
<text x="1171" y="723" textLength="40" lengthAdjust="spacingAndGlyphs">175/1 kb</text>
</g>
<g shape-rendering="crispEdges" stroke-width="2">
<path stroke="#6a8a00" d="M1119 713v9M1122 713v8M1125 713v8M1128 713v7M1131 713v6M1134 713v5M1137 713v5M1140 713v4"/>
<path stroke="#aa1800" d="M1119 722v3M1122 721v4M1125 721v4M1128 720v5M1131 719v6M1134 718v7M1137 718v7M1140 717v8"/>
</g>
<path d="M1264 727l10-10M1268 727l6-6M1272 727l2-2" stroke="#aaa" fill="none" stroke-width="1.200"/>
<path d="M1266 727l8-8M1270 727l4-4" stroke="#fff" fill="none"/>
<rect x="4" y="728" width="1271" height="4" fill="#2a2a2a"/>
</svg>
</body></html>
